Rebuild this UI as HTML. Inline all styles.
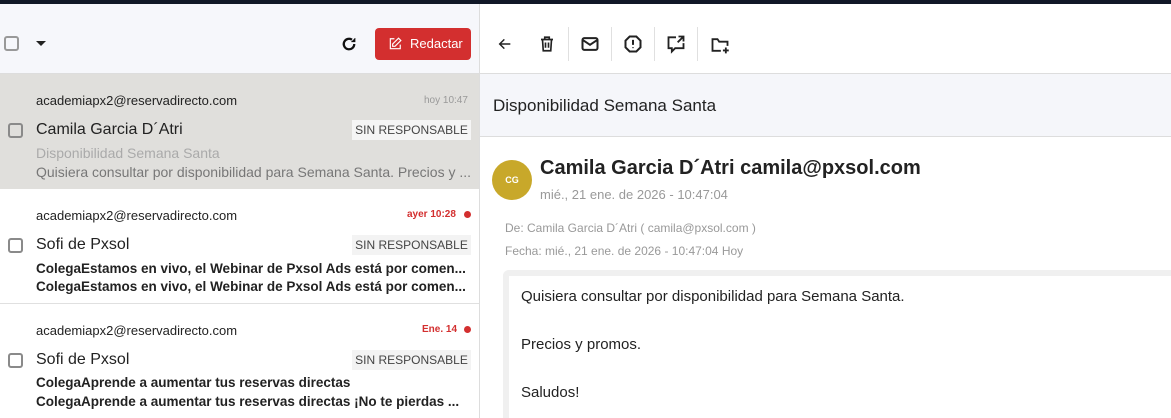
<!DOCTYPE html>
<html><head><meta charset="utf-8"><style>
*{margin:0;padding:0;box-sizing:border-box}
html,body{width:1171px;height:418px;overflow:hidden}
body{font-family:"Liberation Sans",sans-serif;background:#fff;position:relative;color:#222}
.a{position:absolute}
.cb{position:absolute;width:15px;height:15px;border:2px solid #8a8a8a;border-radius:3px}
.tag{position:absolute;left:352px;width:119px;height:20px;background:#f3f3f3;color:#444;font-size:12px;text-align:center;line-height:20px;white-space:nowrap}
.em{position:absolute;left:36px;font-size:13px;color:#222}
.nm{position:absolute;left:36px;font-size:16px;color:#222}
.l{position:absolute;left:36px;font-size:13px;white-space:nowrap;width:436px;overflow:hidden}
.b{font-weight:bold;color:#222;font-size:13.5px}
.dot{position:absolute;left:464px;width:7px;height:7px;border-radius:50%;background:#d32f2f}
.sep{position:absolute;top:27px;width:1px;height:34px;background:#e0e0e0}
svg{position:absolute}
</style></head><body>
<div class="a" style="left:0;top:0;width:1171px;height:4px;background:#111827"></div>
<div class="a" style="left:0;top:4px;width:479px;height:70px;background:#f6f7fb;border-bottom:1px solid #ddd"></div>
<div class="cb" style="left:4px;top:36px;border-color:#999"></div>
<div class="a" style="left:36px;top:41px;width:0;height:0;border-left:5px solid transparent;border-right:5px solid transparent;border-top:5px solid #222"></div>
<svg style="left:340px;top:35px" width="18" height="18" viewBox="0 0 24 24" fill="none" stroke="#111" stroke-width="3"><path d="M19 12a7 7 0 1 1-3-5.7"/><path d="M20 4v5h-5" fill="#111" stroke-width="1"/></svg>
<div class="a" style="left:375px;top:28px;width:96px;height:32px;background:#d32f2f;border-radius:4px;color:#fff;font-size:13px;line-height:32px;padding-left:35px">Redactar</div>
<svg style="left:388px;top:37px" width="14" height="14" viewBox="0 0 24 24" fill="none" stroke="#fff" stroke-width="2"><path d="M11 3H4v17h17v-7"/><path d="M18 2l4 4-10 10H8v-4z"/></svg>
<div class="a" style="left:479px;top:4px;width:1px;height:414px;background:#ddd"></div>
<div class="a" style="left:0;top:74px;width:479px;height:115px;background:#e0dfdc"></div>
<div class="em" style="top:93px">academiapx2@reservadirecto.com</div>
<div class="a" style="left:424px;top:95px;font-size:10px;color:#999">hoy 10:47</div>
<div class="cb" style="left:8px;top:123px"></div>
<div class="nm" style="top:121px">Camila Garcia D´Atri</div>
<div class="tag" style="top:120px;background:#f5f5f5">SIN RESPONSABLE</div>
<div class="l" style="top:145px;color:#aaa;font-size:14px">Disponibilidad Semana Santa</div>
<div class="l" style="top:164px;color:#777;font-size:14px">Quisiera consultar por disponibilidad para Semana Santa. Precios y ...</div>
<div class="a" style="left:0;top:303px;width:479px;height:1px;background:#e0e0e0"></div>
<div class="em" style="top:208px">academiapx2@reservadirecto.com</div>
<div class="a" style="left:407px;top:209px;font-size:10px;color:#d32f2f;font-weight:bold">ayer 10:28</div>
<div class="dot" style="top:211px"></div>
<div class="cb" style="left:8px;top:238px"></div>
<div class="nm" style="top:236px">Sofi de Pxsol</div>
<div class="tag" style="top:235px">SIN RESPONSABLE</div>
<div class="l b" style="top:261px">ColegaEstamos en vivo, el Webinar de Pxsol Ads está por comen...</div>
<div class="l b" style="top:279px">ColegaEstamos en vivo, el Webinar de Pxsol Ads está por comen...</div>
<div class="em" style="top:323px">academiapx2@reservadirecto.com</div>
<div class="a" style="left:422px;top:324px;font-size:10px;color:#d32f2f;font-weight:bold">Ene. 14</div>
<div class="dot" style="top:326px"></div>
<div class="cb" style="left:8px;top:353px"></div>
<div class="nm" style="top:351px">Sofi de Pxsol</div>
<div class="tag" style="top:350px">SIN RESPONSABLE</div>
<div class="l b" style="top:375px">ColegaAprende a aumentar tus reservas directas</div>
<div class="l b" style="top:394px">ColegaAprende a aumentar tus reservas directas ¡No te pierdas ...</div>
<div class="a" style="left:480px;top:73px;width:691px;height:1px;background:#ddd"></div>
<svg style="left:497px;top:36px" width="16" height="16" viewBox="0 0 24 24" fill="none" stroke="#222" stroke-width="2.2"><path d="M20 12H5M11 5l-7 7 7 7"/></svg>
<svg style="left:538px;top:35px" width="18" height="18" viewBox="0 0 24 24" fill="none" stroke="#222" stroke-width="2.2"><path d="M4 6h16M9 6V3h6v3M6 6l1 15h10l1-15M10 10v7M14 10v7"/></svg>
<div class="sep" style="left:568px"></div>
<svg style="left:580px;top:34px" width="20" height="20" viewBox="0 0 24 24" fill="none" stroke="#222" stroke-width="2.4"><rect x="3" y="5" width="18" height="14" rx="2"/><path d="M3 7l9 6 9-6"/></svg>
<div class="sep" style="left:611px"></div>
<svg style="left:623px;top:34px" width="20" height="20" viewBox="0 0 24 24" fill="none" stroke="#222" stroke-width="2.4"><path d="M8 3h8l5 5v8l-5 5H8l-5-5V8z"/><path d="M12 7v6M12 16v1"/></svg>
<div class="sep" style="left:654px"></div>
<svg style="left:666px;top:34px" width="20" height="20" viewBox="0 0 24 24" fill="none" stroke="#222" stroke-width="2.2"><path d="M12 4H3v13h4v4l4-4h10v-6"/><path d="M15 3h6v6M21 3l-7 7"/></svg>
<div class="sep" style="left:697px"></div>
<svg style="left:710px;top:35px" width="20" height="20" viewBox="0 0 24 24" fill="none" stroke="#222" stroke-width="2.2"><path d="M13 19H3V5h6l2 3h10v5"/><path d="M19 15v7M15.5 18.5h7"/></svg>
<div class="a" style="left:480px;top:74px;width:691px;height:63px;background:#f5f6fa;border-bottom:1px solid #ddd"></div>
<div class="a" style="left:493px;top:96px;font-size:17px;color:#222">Disponibilidad Semana Santa</div>
<div class="a" style="left:492px;top:160px;width:40px;height:40px;border-radius:50%;background:#c8a82a;color:#fff;font-size:9px;font-weight:bold;text-align:center;line-height:40px">CG</div>
<div class="a" style="left:540px;top:157px;font-size:20px;font-weight:bold;color:#222">Camila Garcia D´Atri camila@pxsol.com</div>
<div class="a" style="left:540px;top:187px;font-size:13px;color:#999">mié., 21 ene. de 2026 - 10:47:04</div>
<div class="a" style="left:505px;top:221px;font-size:12px;color:#999">De: Camila Garcia D´Atri ( camila@pxsol.com )</div>
<div class="a" style="left:505px;top:244px;font-size:12px;color:#999">Fecha: mié., 21 ene. de 2026 - 10:47:04 Hoy</div>
<div class="a" style="left:503px;top:270px;width:680px;height:148px;border:6px solid #f0f0f0;border-right:none;border-bottom:none;border-radius:6px 0 0 0"></div>
<div class="a" style="left:521px;top:273px;font-size:15px;color:#222;line-height:48px">Quisiera consultar por disponibilidad para Semana Santa.<br>Precios y promos.<br>Saludos!</div>
</body></html>
